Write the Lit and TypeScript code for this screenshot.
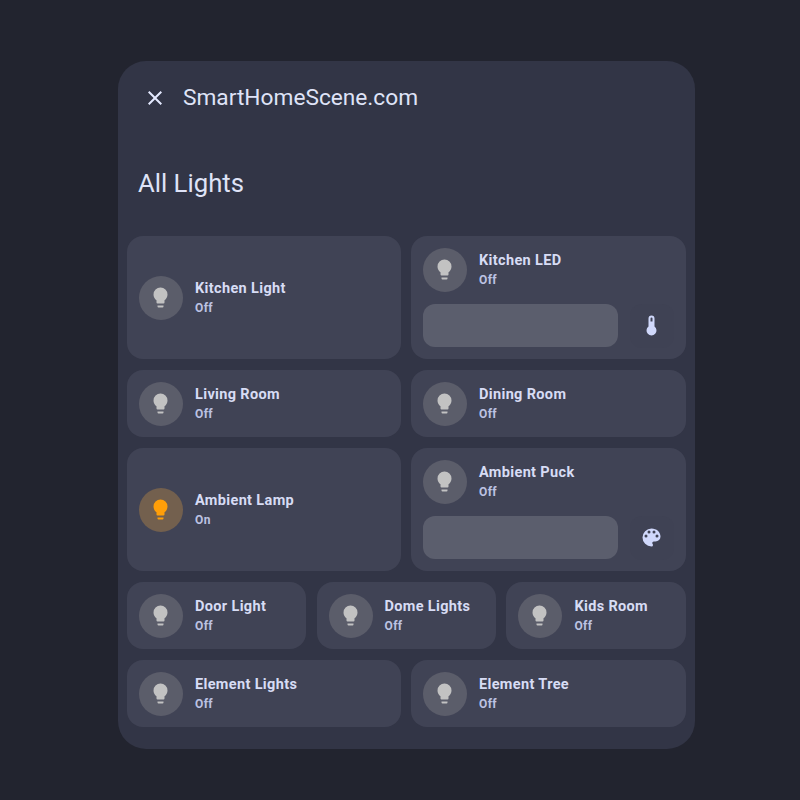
import { LitElement, html, css, svg } from "lit";
import { customElement } from "lit/decorators.js";

const BULB = "M12,2A7,7 0 0,0 5,9C5,11.38 6.19,13.47 8,14.74V17A1,1 0 0,0 9,18H15A1,1 0 0,0 16,17V14.74C17.81,13.47 19,11.38 19,9A7,7 0 0,0 12,2M9,21A1,1 0 0,0 10,22H14A1,1 0 0,0 15,21V20H9V21Z";
const THERMO = "M15 13V5A3 3 0 0 0 9 5V13A5 5 0 1 0 15 13M12 4A1 1 0 0 1 13 5V8H11V5A1 1 0 0 1 12 4Z";
const PALETTE = "M17.5,12A1.5,1.5 0 0,1 16,10.5A1.5,1.5 0 0,1 17.5,9A1.5,1.5 0 0,1 19,10.5A1.5,1.5 0 0,1 17.5,12M14.5,8A1.5,1.5 0 0,1 13,6.5A1.5,1.5 0 0,1 14.5,5A1.5,1.5 0 0,1 16,6.5A1.5,1.5 0 0,1 14.5,8M9.5,8A1.5,1.5 0 0,1 8,6.5A1.5,1.5 0 0,1 9.5,5A1.5,1.5 0 0,1 11,6.5A1.5,1.5 0 0,1 9.5,8M6.5,12A1.5,1.5 0 0,1 5,10.5A1.5,1.5 0 0,1 6.5,9A1.5,1.5 0 0,1 8,10.5A1.5,1.5 0 0,1 6.5,12M12,3A9,9 0 0,0 3,12A9,9 0 0,0 12,21A1.5,1.5 0 0,0 13.5,19.5C13.5,19.11 13.35,18.76 13.11,18.5C12.88,18.23 12.73,17.88 12.73,17.5A1.5,1.5 0 0,1 14.23,16H16A5,5 0 0,0 21,11C21,6.58 16.97,3 12,3Z";
const CLOSE = "M19,6.41L17.59,5L12,10.59L6.41,5L5,6.41L10.59,12L5,17.59L6.41,19L12,13.41L17.59,19L19,17.59L13.41,12L19,6.41Z";

const icon = (d: string, cls: string, box = "0 0 24 24") => html`<svg class=${cls} viewBox=${box}>${svg`<path d=${d}></path>`}</svg>`;

interface Light { name: string; on?: boolean; control?: string; tall?: boolean }

const ROWS: Light[][] = [
  [{ name: "Kitchen Light", tall: true }, { name: "Kitchen LED", control: THERMO, tall: true }],
  [{ name: "Living Room" }, { name: "Dining Room" }],
  [{ name: "Ambient Lamp", on: true, tall: true }, { name: "Ambient Puck", control: PALETTE, tall: true }],
  [{ name: "Door Light" }, { name: "Dome Lights" }, { name: "Kids Room" }],
  [{ name: "Element Lights" }, { name: "Element Tree" }],
];

@customElement("app-root")
export class AppRoot extends LitElement {
  static styles = css`
    :host {
      display: block;
      width: 800px;
      height: 800px;
      box-sizing: border-box;
      padding: 61px 105px 0 118px;
      background: #22242f;
      font-family: Roboto, "Noto Sans", sans-serif;
    }
    .panel {
      height: 688px;
      box-sizing: border-box;
      background: #323546;
      border-radius: 28px;
      padding: 0 9px;
      display: flex;
      flex-direction: column;
    }
    .header {
      height: 74px;
      flex: none;
      display: flex;
      align-items: center;
      gap: 16px;
      padding: 0 0 0 16px;
    }
    .close {
      width: 24px;
      height: 24px;
      fill: #e4e9ff;
      flex: none;
    }
    .site {
      font-size: 22.7px;
      line-height: 28px;
      color: #dfe3f7;
    }
    .title {
      margin: 0;
      height: 101px;
      flex: none;
      box-sizing: border-box;
      padding: 32px 0 0 11px;
      font-size: 25.7px;
      line-height: 32px;
      font-weight: 400;
      color: #dfe3f7;
    }
    .grid {
      display: flex;
      flex-direction: column;
      gap: 11px;
    }
    .row {
      display: grid;
      column-gap: 10px;
      grid-template-columns: 274px 275px;
    }
    .row.three {
      column-gap: 10.5px;
      grid-template-columns: 179px 179.4px 179.6px;
    }
    .card {
      min-width: 0;
      height: 67px;
      box-sizing: border-box;
      padding: 12px;
      background: #404355;
      border-radius: 16px;
      display: flex;
      flex-direction: column;
      justify-content: center;
      gap: 12px;
    }
    .card.tall {
      height: 123px;
    }
    .info {
      display: flex;
      align-items: center;
      gap: 12px;
    }
    .badge {
      width: 44px;
      height: 44px;
      flex: none;
      border-radius: 50%;
      background: #5b5d6a;
      display: flex;
      align-items: center;
      justify-content: center;
    }
    .badge.on {
      background: #73604e;
    }
    .bulb {
      width: 24px;
      height: 24px;
      fill: #c2c2c2;
    }
    .on .bulb {
      fill: #ff9f09;
    }
    .name {
      font-size: 14.5px;
      line-height: 21px;
      font-weight: 700;
      letter-spacing: 0.35px;
      color: #d7dcf4;
      white-space: nowrap;
    }
    .state {
      font-size: 12px;
      line-height: 19px;
      font-weight: 700;
      letter-spacing: 0.4px;
      color: #bcc2e2;
    }
    .controls {
      display: flex;
      gap: 12px;
    }
    .slider {
      flex: 1;
      height: 43.5px;
      border-radius: 12px;
      background: #5b5e6d;
    }
    .btn {
      width: 44px;
      height: 44px;
      flex: none;
      border-radius: 12px;
      background: #3f4254;
      display: flex;
      align-items: center;
      justify-content: center;
    }
    .ctl {
      width: 24px;
      height: 24px;
      fill: #d0d8fb;
    }
  `;

  private card(l: Light) {
    return html`
      <div class="card ${l.tall ? "tall" : ""}">
        <div class="info">
          <div class="badge ${l.on ? "on" : ""}">${icon(BULB, "bulb", "0.5 0.5 24 24")}</div>
          <div>
            <div class="name">${l.name}</div>
            <div class="state">${l.on ? "On" : "Off"}</div>
          </div>
        </div>
        ${l.control
          ? html`<div class="controls">
              <div class="slider"></div>
              <div class="btn">${icon(l.control, "ctl", "0.5 0.5 24 24")}</div>
            </div>`
          : ""}
      </div>
    `;
  }

  render() {
    return html`
      <div class="panel">
        <div class="header">
          ${icon(CLOSE, "close")}
          <span class="site">SmartHomeScene.com</span>
        </div>
        <h1 class="title">All Lights</h1>
        <div class="grid">
          ${ROWS.map((r) => html`<div class="row ${r.length === 3 ? "three" : ""}">${r.map((l) => this.card(l))}</div>`)}
        </div>
      </div>
    `;
  }
}
